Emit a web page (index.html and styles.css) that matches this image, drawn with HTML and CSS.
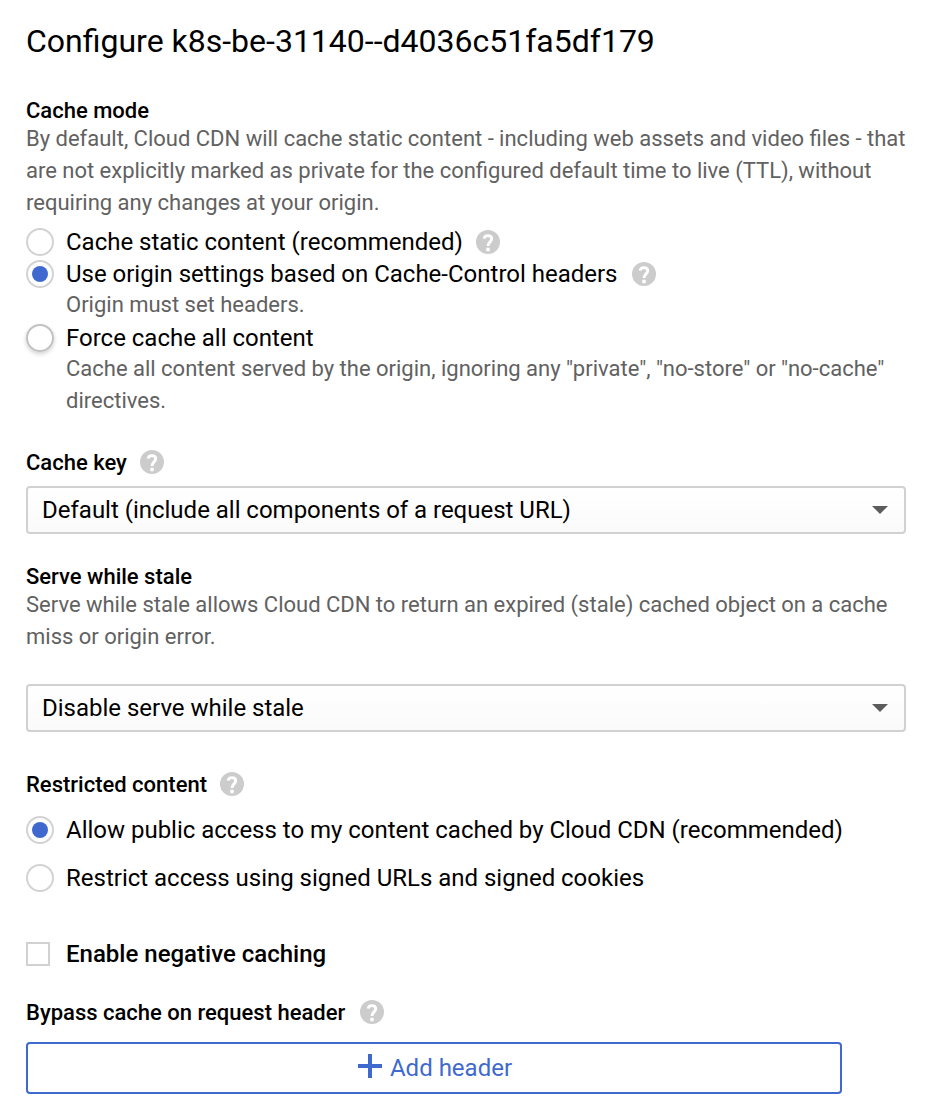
FILE: index.html
```html
<!DOCTYPE html>
<html lang="en">
<head>
<meta charset="utf-8">
<title>Configure backend</title>
<link rel="stylesheet" href="styles.css">
</head>
<body>
<svg class="defs" width="0" height="0">
  <symbol id="help" viewBox="0 0 24 24"><circle cx="12" cy="12" r="12" fill="#ccc"/><path d="M8.1 8.6C8.4 6.6 9.9 5.6 11.9 5.6c2.3 0 3.8 1.3 3.8 3.2 0 3-3.7 3.3-3.7 7.2" fill="none" stroke="#fff" stroke-width="2.9"/><circle cx="12" cy="19.4" r="2" fill="#fff"/></symbol>
</svg>
<form class="panel">
  <h1 class="title">Configure k8s-be-31140--d4036c51fa5df179</h1>

  <section class="group mode">
    <h2 class="label">Cache mode</h2>
    <p class="help-text">By default, Cloud CDN will cache static content - including web assets and video files - that<br>are not explicitly marked as private for the configured default time to live (TTL), without<br>requiring any changes at your origin.</p>
    <div class="options">
      <div class="option tight"><span class="radio"></span><span class="name">Cache static content (recommended)</span><svg class="help"><use href="#help"/></svg></div>
      <div class="option"><span class="radio checked"></span><span class="name">Use origin settings based on Cache-Control headers</span><svg class="help"><use href="#help"/></svg></div>
      <p class="help-text indented">Origin must set headers.</p>
      <div class="option"><span class="radio raised"></span><span class="name">Force cache all content</span></div>
      <p class="help-text indented">Cache all content served by the origin, ignoring any "private", "no-store" or "no-cache"<br>directives.</p>
    </div>
  </section>

  <section class="group key">
    <h2 class="label with-help"><span>Cache key</span><svg class="help"><use href="#help"/></svg></h2>
    <div class="select"><span>Default (include all components of a request URL)</span><i class="caret"></i></div>
  </section>

  <section class="group stale">
    <h2 class="label">Serve while stale</h2>
    <p class="help-text">Serve while stale allows Cloud CDN to return an expired (stale) cached object on a cache<br>miss or origin error.</p>
    <div class="select"><span>Disable serve while stale</span><i class="caret"></i></div>
  </section>

  <section class="group restricted">
    <h2 class="label with-help"><span>Restricted content</span><svg class="help"><use href="#help"/></svg></h2>
    <div class="access">
      <div class="option"><span class="radio checked"></span><span class="name">Allow public access to my content cached by Cloud CDN (recommended)</span></div>
      <div class="option"><span class="radio"></span><span class="name">Restrict access using signed URLs and signed cookies</span></div>
    </div>
  </section>

  <div class="option negative"><span class="checkbox"></span><span class="name">Enable negative caching</span></div>

  <section class="group bypass">
    <h2 class="label with-help"><span>Bypass cache on request header</span><svg class="help"><use href="#help"/></svg></h2>
    <div class="add"><svg class="plus" viewBox="0 0 24 24"><path d="M12 0v24M0 12h24" stroke="#4069d0" stroke-width="4"/></svg><span>Add header</span></div>
  </section>
</form>
</body>
</html>
```
FILE: styles.css
```css
* { box-sizing: border-box; }
body { margin: 0; background: #fff; color: #000; font-family: Roboto, "Liberation Sans", sans-serif; }
h1, h2, p { margin: 0; }
.defs { display: block; }
.panel { width: 926px; height: 1116px; padding: 21px 20px 0 26px; overflow: hidden; white-space: nowrap; }
.title { font-size: 32px; line-height: 40px; font-weight: 400; }
.label { display: flex; align-items: center; gap: 13px; height: 24px; font-size: 22px; line-height: 24px; font-weight: 500; }
.with-help span { padding-top: 2px; }
.help-text { color: #616161; font-size: 22px; line-height: 32px; word-spacing: -0.05px; }
.mode { margin-top: 38px; }
.options { margin-top: 7px; }
.option { display: flex; align-items: center; height: 32px; font-size: 24px; line-height: 32px; word-spacing: -0.08px; }
.name { margin-left: 12px; }
.help { width: 24px; height: 24px; flex: none; }
.option .help { margin-left: 14.4px; }
.option.tight .help { margin-left: 13.2px; }
.indented { padding-left: 40px; position: relative; top: -1px; }
.radio { display: flex; align-items: center; justify-content: center; flex: none; width: 28px; height: 28px; border: 2px solid #d3d3d3; border-radius: 50%; }
.checked::after { content: ""; width: 16px; height: 16px; border-radius: 50%; background: #4069d0; }
.raised { border-color: #c2c2c2; box-shadow: 0 2px 4px rgba(0, 0, 0, .18); }
.key { margin-top: 32px; }
.select { display: flex; align-items: center; justify-content: space-between; height: 48px; padding: 0 16px 0 14px; border: 2px solid #d1d1d1; border-radius: 4px; background: linear-gradient(#fff, #fafafa); font-size: 24px; line-height: 32px; word-spacing: -0.08px; }
.key .select { margin-top: 12px; }
.caret { border: 8px solid transparent; border-top-color: #5c5c5c; border-bottom: 0; }
.stale { margin-top: 31px; }
.stale .select { margin-top: 31px; }
.restricted { margin-top: 40px; }
.access { display: grid; gap: 16px; margin-top: 18px; }
.negative { margin-top: 44px; font-weight: 500; word-spacing: 0; }
.checkbox { width: 24px; height: 24px; border: 2px solid #d1d1d1; flex: none; }
.negative .name { margin-left: 16px; }
.bypass { margin-top: 30px; }
.bypass .label { gap: 15px; }
.add { display: flex; align-items: center; justify-content: center; gap: 8px; width: 816px; height: 52px; margin-top: 18px; padding-left: 2px; border: 2px solid #4069d0; border-radius: 4px; color: #4069d0; font-size: 24px; }
.plus { width: 24px; height: 24px; margin-bottom: 4px; }
```
